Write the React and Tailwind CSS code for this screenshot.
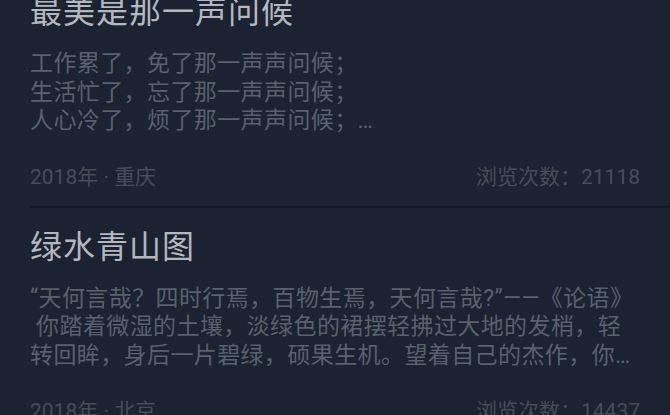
const posts = [
  {
    title: "最美是那一声问候",
    lines: [
      "工作累了，免了那一声声问候；",
      "生活忙了，忘了那一声声问候；",
      "人心冷了，烦了那一声声问候；…",
    ],
    year: "2018年",
    place: "重庆",
    views: 21118,
  },
  {
    title: "绿水青山图",
    lines: [
      "“天何言哉？四时行焉，百物生焉，天何言哉?”——《论语》",
      " 你踏着微湿的土壤，淡绿色的裙摆轻拂过大地的发梢，轻",
      "转回眸，身后一片碧绿，硕果生机。望着自己的杰作，你…",
    ],
    year: "2018年",
    place: "北京",
    views: 14437,
  },
];

const PostCard = ({ post }) => (
  <div className="ml-[30px] border-b-2 border-[#131926] pr-[30px] pt-[19px] pb-[15px]">
    <h2 className="text-[32px] leading-[40px] tracking-[1px] text-[#b4b7bc] font-normal whitespace-nowrap">
      {post.title}
    </h2>
    <div className="mt-[18px] text-[23px] leading-[28.5px] tracking-[0.4px] text-[#5a606d]">
      {post.lines.map((line, i) => (
        <p key={i} className="whitespace-pre">
          {line}
        </p>
      ))}
    </div>
    <div className="mt-[27px] flex items-center justify-between text-[21px] leading-[28px] text-[#474d59] whitespace-pre">
      <span>
        {post.year} · {post.place}
      </span>
      <span>浏览次数：{post.views}</span>
    </div>
  </div>
);

export default function App() {
  return (
    <div
      className="h-[415px] w-full overflow-hidden bg-[#1b2231]"
      style={{ fontFamily: 'Roboto, "Noto Sans CJK SC", sans-serif' }}
    >
      <div className="-mt-[27px]">
        {posts.map((post, i) => (
          <PostCard key={i} post={post} />
        ))}
      </div>
    </div>
  );
}
